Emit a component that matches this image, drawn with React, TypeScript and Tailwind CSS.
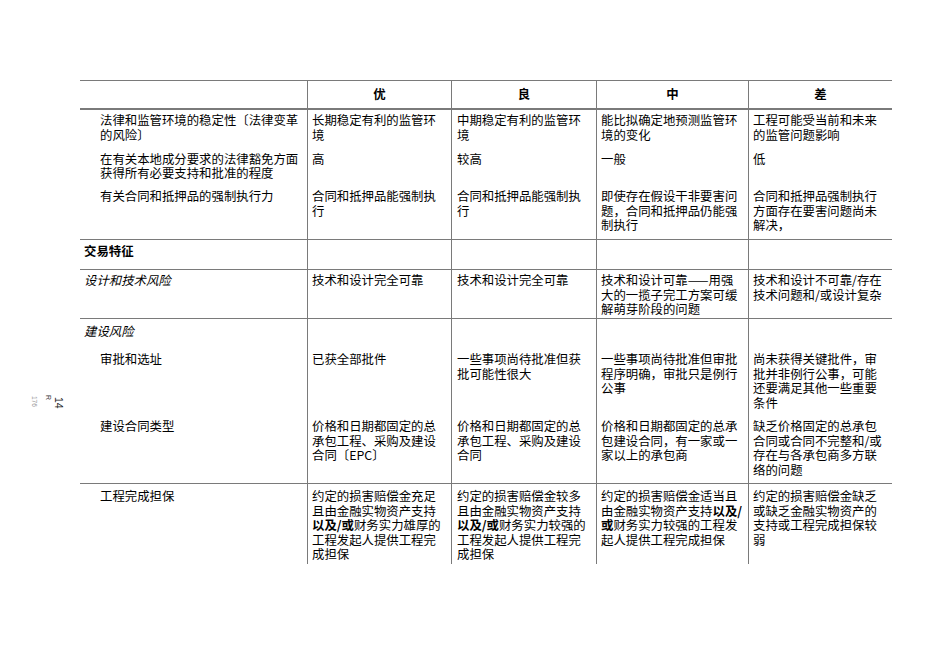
import React from "react";
import clsx from "clsx";

type Line = React.ReactNode;

interface Row {
  h: string;
  pt: string;
  top?: boolean;
  head?: boolean;
  first: Line[];
  firstKind?: "indent" | "bold" | "italic";
  cells: Line[][];
}

const B = ({ children }: { children: React.ReactNode }) => <span className="font-bold">{children}</span>;

const ROWS: Row[] = [
  {
    h: "h-[39px]", pt: "pt-[3px]", top: true, firstKind: "indent",
    first: ["法律和监管环境的稳定性〔法律变革", "的风险〕"],
    cells: [
      ["长期稳定有利的监管环", "境"],
      ["中期稳定有利的监管环", "境"],
      ["能比拟确定地预测监管环", "境的变化"],
      ["工程可能受当前和未来", "的监管问题影响"],
    ],
  },
  {
    h: "h-[37px]", pt: "pt-[3.5px]", firstKind: "indent",
    first: ["在有关本地成分要求的法律豁免方面", "获得所有必要支持和批准的程度"],
    cells: [["高"], ["较高"], ["一般"], ["低"]],
  },
  {
    h: "h-[54px]", pt: "pt-[4px]", firstKind: "indent",
    first: ["有关合同和抵押品的强制执行力"],
    cells: [
      ["合同和抵押品能强制执", "行"],
      ["合同和抵押品能强制执", "行"],
      ["即使存在假设干非要害问", "题，合同和抵押品仍能强", "制执行"],
      ["合同和抵押品强制执行", "方面存在要害问题尚未", "解决，"],
    ],
  },
  {
    h: "h-[30px]", pt: "pt-[4px]", top: true, firstKind: "bold",
    first: ["交易特征"],
    cells: [[], [], [], []],
  },
  {
    h: "h-[49px]", pt: "pt-[3px]", top: true, firstKind: "italic",
    first: ["设计和技术风险"],
    cells: [
      ["技术和设计完全可靠"],
      ["技术和设计完全可靠"],
      ["技术和设计可靠——用强", "大的一揽子完工方案可缓", "解萌芽阶段的问题"],
      ["技术和设计不可靠/存在", "技术问题和/或设计复杂"],
    ],
  },
  {
    h: "h-[30px]", pt: "pt-[5px]", top: true, firstKind: "italic",
    first: ["建设风险"],
    cells: [[], [], [], []],
  },
  {
    h: "h-[67px]", pt: "pt-[4.25px]", firstKind: "indent",
    first: ["审批和选址"],
    cells: [
      ["已获全部批件"],
      ["一些事项尚待批准但获", "批可能性很大"],
      ["一些事项尚待批准但审批", "程序明确，审批只是例行", "公事"],
      ["尚未获得关键批件，审", "批并非例行公事，可能", "还要满足其他一些重要", "条件"],
    ],
  },
  {
    h: "h-[68px]", pt: "pt-[4px]", firstKind: "indent",
    first: ["建设合同类型"],
    cells: [
      ["价格和日期都固定的总", "承包工程、采购及建设", "合同〔EPC〕"],
      ["价格和日期都固定的总", "承包工程、采购及建设", "合同"],
      ["价格和日期都固定的总承", "包建设合同，有一家或一", "家以上的承包商"],
      ["缺乏价格固定的总承包", "合同或合同不完整和/或", "存在与各承包商多方联", "络的问题"],
    ],
  },
  {
    h: "h-[81px]", pt: "pt-[5px]", top: true, firstKind: "indent",
    first: ["工程完成担保"],
    cells: [
      ["约定的损害赔偿金充足", "且由金融实物资产支持", <><B>以及/或</B>财务实力雄厚的</>, "工程发起人提供工程完", "成担保"],
      ["约定的损害赔偿金较多", "且由金融实物资产支持", <><B>以及/或</B>财务实力较强的</>, "工程发起人提供工程完", "成担保"],
      ["约定的损害赔偿金适当且", <>由金融实物资产支持<B>以及/</B></>, <><B>或</B>财务实力较强的工程发</>, "起人提供工程完成担保"],
      ["约定的损害赔偿金缺乏", "或缺乏金融实物资产的", "支持或工程完成担保较", "弱"],
    ],
  },
];

const LINE = "border-[#7a7a7a]";
const CELL_PL = ["pl-[4px]", "pl-[5px]", "pl-[4px]", "pl-[4px]"];

function Lines({ lines }: { lines: Line[] }) {
  return (
    <>
      {lines.map((l, i) => (
        <div key={i} className="whitespace-nowrap">{l}</div>
      ))}
    </>
  );
}

function TableRow({ row }: { row: Row }) {
  return (
    <>
      <div
        className={clsx(
          row.h, row.pt,
          row.top && `border-t ${LINE}`,
          row.firstKind === "indent" ? "pl-[20px]" : "pl-[4px]",
          row.firstKind === "bold" && "font-bold",
          row.firstKind === "italic" && "italic"
        )}
      >
        <Lines lines={row.first} />
      </div>
      {row.cells.map((c, i) => (
        <div key={i} className={clsx(row.h, row.pt, CELL_PL[i], "border-l", LINE, row.top && "border-t")}>
          <Lines lines={c} />
        </div>
      ))}
    </>
  );
}

export default function App() {
  return (
    <div className="relative w-[950px] h-[672px] bg-white text-black font-['Noto_Sans_CJK_SC',sans-serif] overflow-hidden">
      {/* page margin marks */}
      <div className="absolute left-[30px] top-[396px] [writing-mode:vertical-rl] text-[6.5px] leading-[6.5px] text-[#9a9a9a] font-['Liberation_Sans',sans-serif]">176</div>
      <div className="absolute left-[45px] top-[395px] [writing-mode:vertical-rl] text-[7px] leading-[7px] text-[#333] font-['Liberation_Sans',sans-serif]">R</div>
      <div className="absolute left-[53px] top-[397px] [writing-mode:vertical-rl] text-[10.5px] leading-[10.5px] text-[#222] font-['Liberation_Sans',sans-serif]">14</div>

      <div className="pt-[80px] pl-[80px]">
        <div className="grid grid-cols-[227px_144px_145px_152px_144px] text-[12.4px] leading-[14.5px]">
          <div className={`h-[29px] border-t border-b ${LINE}`} />
          {["优", "良", "中", "差"].map((t) => (
            <div key={t} className={`h-[29px] border-t border-b border-l ${LINE} flex items-center justify-center font-bold`}>
              {t}
            </div>
          ))}
          {ROWS.map((r, i) => (
            <TableRow key={i} row={r} />
          ))}
        </div>
      </div>
    </div>
  );
}
